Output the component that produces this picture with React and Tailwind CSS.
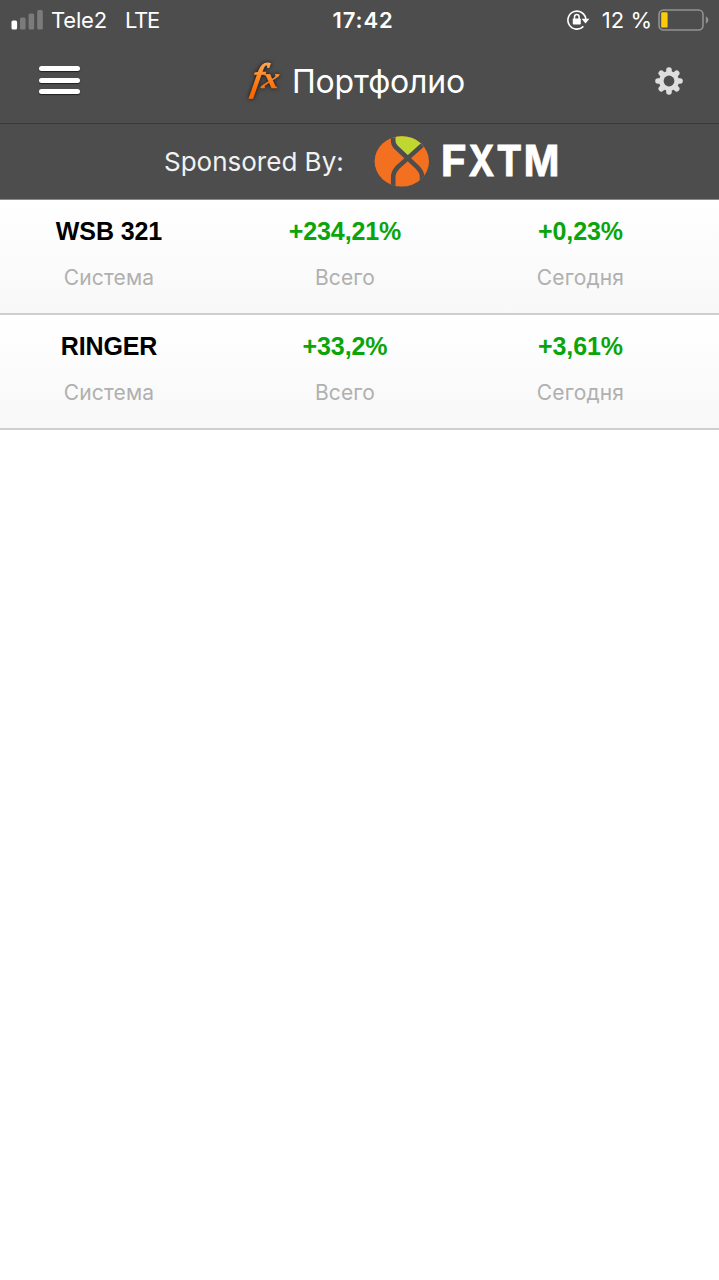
import React from "react";
import clsx from "clsx";

const systems = [
  { name: "WSB 321", total: "+234,21%", today: "+0,23%" },
  { name: "RINGER", total: "+33,2%", today: "+3,61%" },
];

function SignalIcon() {
  return (
    <svg className="w-8 h-5" viewBox="0 0 32 20">
      <rect x="0.5" y="10.5" width="5.6" height="9" rx="1.6" fill="#fff" />
      <rect x="9" y="7.5" width="5.6" height="12" rx="1.6" fill="#7b7b7b" />
      <rect x="17.6" y="3.5" width="5.6" height="16" rx="1.6" fill="#7b7b7b" />
      <rect x="26.2" y="0" width="5.6" height="19.5" rx="1.6" fill="#7b7b7b" />
    </svg>
  );
}

function LockIcon() {
  return (
    <svg className="w-[23px] h-5" viewBox="0 0 23 20" fill="none">
      <path d="M16.4 16.4A9 9 0 1 1 18.9 9.6" stroke="#fff" strokeWidth="1.6" />
      <path d="M14.6 8.8H22.4L18.5 13.4Z" fill="#fff" />
      <rect x="5.8" y="8.4" width="8" height="6.2" rx="0.8" fill="#fff" />
      <path d="M7.5 9V6.9a2.3 2.3 0 0 1 4.6 0V9" stroke="#fff" strokeWidth="1.5" />
    </svg>
  );
}

function BatteryIcon() {
  return (
    <svg className="w-[51px] h-[22px]" viewBox="0 0 51 22">
      <rect x="1" y="1" width="44" height="20" rx="4.5" fill="none" stroke="#929292" strokeWidth="1.6" />
      <rect x="3.2" y="3.2" width="6.4" height="15.4" rx="1.2" fill="#fbcb0a" />
      <path d="M47.8 7.2Q50.4 8.4 50.4 11T47.8 14.8Z" fill="#929292" />
    </svg>
  );
}

function FxIcon() {
  return (
    <svg className="w-10 h-11 overflow-visible" viewBox="0 0 40 44">
      <defs>
        <linearGradient id="fx" x1="0" y1="0" x2="0" y2="1">
          <stop offset="0.15" stopColor="#ffa652" />
          <stop offset="0.85" stopColor="#ff6a00" />
        </linearGradient>
      </defs>
      <g
        className="font-['Liberation_Serif',serif] italic drop-shadow-[0_0_2px_#111]"
        fill="url(#fx)"
        stroke="url(#fx)"
        strokeWidth="1.5"
      >
        <text fontSize="38" transform="translate(6.5 30.5) skewX(-10)">f</text>
        <text fontSize="30" fontWeight="bold" strokeWidth="0.3" transform="translate(17 29) skewX(-8) scale(1.15 1)">
          x
        </text>
      </g>
    </svg>
  );
}

function GearIcon() {
  return (
    <svg className="w-7 h-7" viewBox="-14 -14 28 28">
      <g stroke="#dedede" strokeWidth="5.6" strokeLinecap="round">
        <path d="M0 -11V11" />
        <path d="M-11 0H11" />
        <path d="M-7.7 -7.7L7.7 7.7" />
        <path d="M7.7 -7.7L-7.7 7.7" />
      </g>
      <circle r="10" fill="#dedede" />
      <circle r="5.4" fill="#4d4d4d" />
    </svg>
  );
}

function FxtmLogo() {
  return (
    <svg className="w-[190px] h-[60px] overflow-visible" viewBox="0 -4 190 60">
      <clipPath id="ball">
        <ellipse cx="27.8" cy="25.4" rx="27.2" ry="25.2" />
      </clipPath>
      <g clipPath="url(#ball)">
        <rect width="56" height="52" fill="#f37021" />
        <path d="M19 0H50V10L33 23L19 9Z" fill="#bfd730" />
        <g fill="none" stroke="#4d4d4d" strokeWidth="4.6">
          <path d="M19.2 0V5Q19.2 8.6 22 11.2L43.5 31.4Q48 36 48 40V52" />
          <path d="M55 3L48.8 8.6L23.6 31.4Q19.2 36 19.2 41V52" />
        </g>
      </g>
      <g
        className="font-['Inter',sans-serif] font-bold"
        fill="#fff"
        stroke="#fff"
        strokeWidth="0.8"
        fontSize="42.5"
      >
        <text x="66.8" y="40.2" textLength="26" lengthAdjust="spacingAndGlyphs">F</text>
        <text x="94.5" y="40.2" textLength="26" lengthAdjust="spacingAndGlyphs">X</text>
        <text x="122.6" y="40.2" textLength="25.5" lengthAdjust="spacingAndGlyphs">T</text>
        <text x="149.8" y="40.2" textLength="35.5" lengthAdjust="spacingAndGlyphs">M</text>
      </g>
    </svg>
  );
}

function StatusBar() {
  return (
    <div className="flex h-10 items-center pl-[11px] pr-[10px] text-[22px] leading-none text-white">
      <div className="flex flex-1 items-center">
        <SignalIcon />
        <span className="ml-2 tracking-[-0.2px]">Tele2</span>
        <span className="ml-[18px] tracking-[-1.2px]">LTE</span>
      </div>
      <span className="ml-1.5 font-semibold tracking-[0.9px]">17:42</span>
      <div className="flex flex-1 items-center justify-end">
        <LockIcon />
        <span className="ml-3 mr-1.5">12 %</span>
        <BatteryIcon />
      </div>
    </div>
  );
}

function Cell({ value, label, className }) {
  return (
    <div className={clsx("flex flex-col items-center", className)}>
      <span className="font-['Liberation_Sans',sans-serif] text-[25px] font-bold leading-[30px] tracking-[-0.1px]">
        {value}
      </span>
      <span className="mt-[18px] text-[21px] leading-[28px] tracking-[0.15px] text-[#b0b0b0]">{label}</span>
    </div>
  );
}

function App() {
  return (
    <div className="min-h-screen w-full bg-white font-['Inter',sans-serif]">
      <header className="h-[124px] border-b border-[#383838] bg-[#4d4d4d]">
        <StatusBar />
        <div className="flex h-[82px] items-center pl-[39px] pr-9">
          <button className="mb-[2px] flex w-[41px] flex-col gap-[6.5px]">
            <span className="h-[5px] rounded-full bg-white shadow-[0_1px_1px_#222]" />
            <span className="h-[5px] rounded-full bg-white shadow-[0_1px_1px_#222]" />
            <span className="h-[5px] rounded-full bg-white shadow-[0_1px_1px_#222]" />
          </button>
          <div className="ml-[164px] flex flex-1 items-center gap-2">
            <FxIcon />
            <h1 className="pt-px text-[32px] leading-none tracking-[-0.2px] text-white">Портфолио</h1>
          </div>
          <button>
            <GearIcon />
          </button>
        </div>
      </header>

      <div className="flex h-[76px] items-center border-b border-[#8a8a8a] bg-[#4d4d4d] pl-[164px]">
        <span className="w-[210px] text-[26px] leading-none text-[#f2f2f2]">Sponsored By:</span>
        <FxtmLogo />
      </div>

      <ul>
        {systems.map((s) => (
          <li
            key={s.name}
            className="flex h-[115px] border-b-2 border-[#cfcfcf] bg-gradient-to-b from-white to-[#f8f8f8] pt-[16px]"
          >
            <Cell className="w-[218px] text-black" value={s.name} label="Система" />
            <Cell className="w-[254px] text-[#0aa50a]" value={s.total} label="Всего" />
            <Cell className="w-[217px] text-[#0aa50a]" value={s.today} label="Сегодня" />
          </li>
        ))}
      </ul>
    </div>
  );
}

export default App;
